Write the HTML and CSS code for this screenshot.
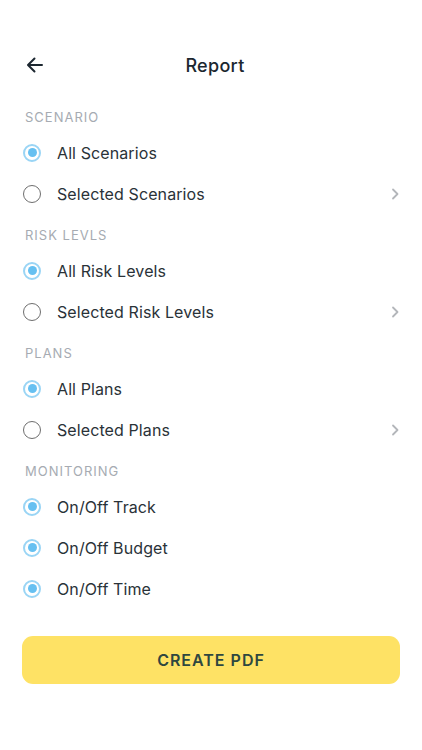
FILE: index.html
```html
<!DOCTYPE html>
<html>
<head>
<meta charset="utf-8">
<link rel="stylesheet" href="styles.css">
</head>
<body>
<div class="page">
  <header class="header">
    <svg class="back" width="20" height="20" viewBox="0 0 20 20"><path d="M17 10H3.5M9.5 3.5L3 10l6.5 6.5" fill="none" stroke="#1c2730" stroke-width="2" stroke-linecap="round" stroke-linejoin="round"/></svg>
    <h1 class="title">Report</h1>
  </header>

  <div class="label first">SCENARIO</div>
  <div class="row"><span class="radio on"></span><span class="text">All Scenarios</span></div>
  <div class="row"><span class="radio"></span><span class="text">Selected Scenarios</span><svg class="chev" width="8" height="12" viewBox="0 0 8 12"><path d="M2 1.5L6.5 6 2 10.5" fill="none" stroke="#b3b6ba" stroke-width="1.8" stroke-linecap="round" stroke-linejoin="round"/></svg></div>

  <div class="label">RISK LEVLS</div>
  <div class="row"><span class="radio on"></span><span class="text">All Risk Levels</span></div>
  <div class="row"><span class="radio"></span><span class="text">Selected Risk Levels</span><svg class="chev" width="8" height="12" viewBox="0 0 8 12"><path d="M2 1.5L6.5 6 2 10.5" fill="none" stroke="#b3b6ba" stroke-width="1.8" stroke-linecap="round" stroke-linejoin="round"/></svg></div>

  <div class="label">PLANS</div>
  <div class="row"><span class="radio on"></span><span class="text">All Plans</span></div>
  <div class="row"><span class="radio"></span><span class="text">Selected Plans</span><svg class="chev" width="8" height="12" viewBox="0 0 8 12"><path d="M2 1.5L6.5 6 2 10.5" fill="none" stroke="#b3b6ba" stroke-width="1.8" stroke-linecap="round" stroke-linejoin="round"/></svg></div>

  <div class="label">MONITORING</div>
  <div class="row"><span class="radio on"></span><span class="text">On/Off Track</span></div>
  <div class="row"><span class="radio on"></span><span class="text">On/Off Budget</span></div>
  <div class="row"><span class="radio on"></span><span class="text">On/Off Time</span></div>

  <button class="btn">CREATE PDF</button>
</div>
</body>
</html>
```

FILE: styles.css
```css
* { box-sizing: border-box; }
html, body { margin: 0; padding: 0; background: #fff; }
body { font-family: Inter, "Open Sans", "Liberation Sans", sans-serif; color: #2a3238; }
.page { width: 422px; height: 750px; display: flex; flex-direction: column; }
.header { height: 40px; margin-top: 45px; position: relative; display: flex; align-items: center; justify-content: center; padding-left: 8px; }
.back { position: absolute; left: 25px; top: 10px; }
.title { margin: 0; font-size: 18px; font-weight: 500; color: #1c2730; letter-spacing: 0.3px; }
.label { height: 30px; margin-top: 6px; padding-left: 25px; display: flex; align-items: center; font-size: 13px; letter-spacing: 1px; color: #a6abb2; }
.label.first { margin-top: 17px; }
.row { height: 41px; display: flex; align-items: center; padding-left: 23px; padding-right: 23px; }
.radio { width: 18px; height: 18px; border-radius: 50%; border: 1.8px solid #6e6e6e; flex: none; position: relative; }
.radio.on { border: 2px solid #9ad5f5; }
.radio.on::after { content: ""; position: absolute; left: 2.5px; top: 2.5px; width: 9px; height: 9px; border-radius: 50%; background: #66c0f1; }
.text { margin-left: 16px; font-size: 16px; color: #2a3238; flex: 1; letter-spacing: 0.1px; }
.chev { flex: none; }
.btn { margin: 27px 22px 0; height: 48px; border: none; border-radius: 11px; background: #fee265; font-family: Inter, "Open Sans", "Liberation Sans", sans-serif; font-size: 16px; font-weight: 600; letter-spacing: 1px; color: #2f4740; }
```
